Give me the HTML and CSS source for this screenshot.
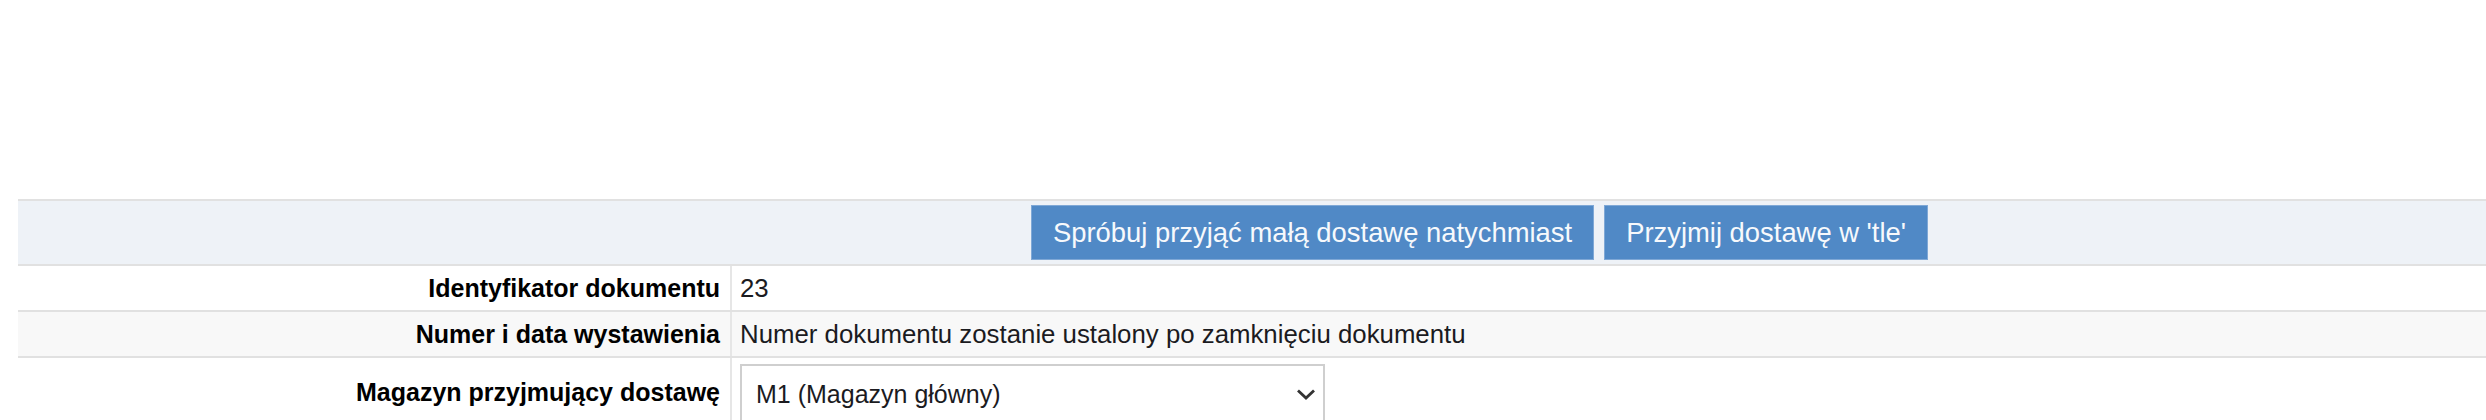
FILE: index.html
```html
<!DOCTYPE html>
<html lang="pl">
<head>
  <meta charset="UTF-8">
  <meta name="viewport" content="width=device-width, initial-scale=1.0">
  <title>Przyjęcie dostawy</title>
  <link rel="stylesheet" href="styles.css">
</head>
<body>
  <section class="delivery">
    <table class="doc-table">
      <tr class="actions-row">
        <td colspan="2">
          <div class="actions">
            <button class="btn">Spróbuj przyjąć małą dostawę natychmiast</button>
            <button class="btn">Przyjmij dostawę w 'tle'</button>
          </div>
        </td>
      </tr>
      <tr>
        <th>Identyfikator dokumentu</th>
        <td>23</td>
      </tr>
      <tr class="alt">
        <th>Numer i data wystawienia</th>
        <td>Numer dokumentu zostanie ustalony po zamknięciu dokumentu</td>
      </tr>
      <tr class="select-row">
        <th>Magazyn przyjmujący dostawę</th>
        <td>
          <span class="select-wrap">
            <select class="warehouse">
              <option>M1 (Magazyn główny)</option>
            </select>
            <svg class="chevron" width="20" height="13" viewBox="0 0 20 13">
              <path d="M2 2.5 L10 10 L18 2.5" fill="none" stroke="#333" stroke-width="2.8"/>
            </svg>
          </span>
        </td>
      </tr>
    </table>
  </section>
</body>
</html>
```

FILE: styles.css
```css
body {
  margin: 0;
  padding: 0;
  background-color: #ffffff;
  font-family: "Liberation Sans", Arial, sans-serif;
  color: #1b1b1f;
  overflow: hidden;
}

.delivery {
  padding: 199px 0 0 18px;
}

.doc-table {
  width: 100%;
  border-collapse: collapse;
  font-size: 25.8px;
}

.doc-table td, .doc-table th {
  border-top: 2px solid #e1e1e1;
  border-bottom: 2px solid #e1e1e1;
  padding: 0 10px;
  height: 44px;
  white-space: nowrap;
}

.doc-table th {
  width: 692px;
  text-align: right;
  font-size: 25px;
  font-weight: bold;
  color: #000;
  border-right: 2px solid #e6e6e6;
}

.doc-table td {
  text-align: left;
  padding-left: 8px;
}

.actions-row td {
  background-color: #eef2f7;
  height: 63px;
  padding: 0;
}

.actions {
  display: flex;
  gap: 10px;
  padding-left: 1013px;
}

.btn {
  height: 55px;
  padding: 0 21px;
  background-color: #5089c6;
  color: #f7f9fc;
  border: 1px solid #7fa8d6;
  font-family: "Liberation Sans", Arial, sans-serif;
  font-size: 27.4px;
  cursor: pointer;
}

.alt th, .alt td {
  background-color: #f8f8f8;
}

.select-row th, .select-row td {
  height: 68px;
  border-bottom: none;
}

.select-wrap {
  position: relative;
  display: inline-block;
}

.warehouse {
  appearance: none;
  -webkit-appearance: none;
  width: 585px;
  height: 60px;
  margin-top: 3px;
  padding: 0 40px 0 14px;
  border: 2px solid #cfcfcf;
  background-color: #fff;
  font-family: "Liberation Sans", Arial, sans-serif;
  font-size: 25px;
  color: #1b1b1f;
}

.chevron {
  position: absolute;
  right: 9px;
  top: 27px;
}
```
